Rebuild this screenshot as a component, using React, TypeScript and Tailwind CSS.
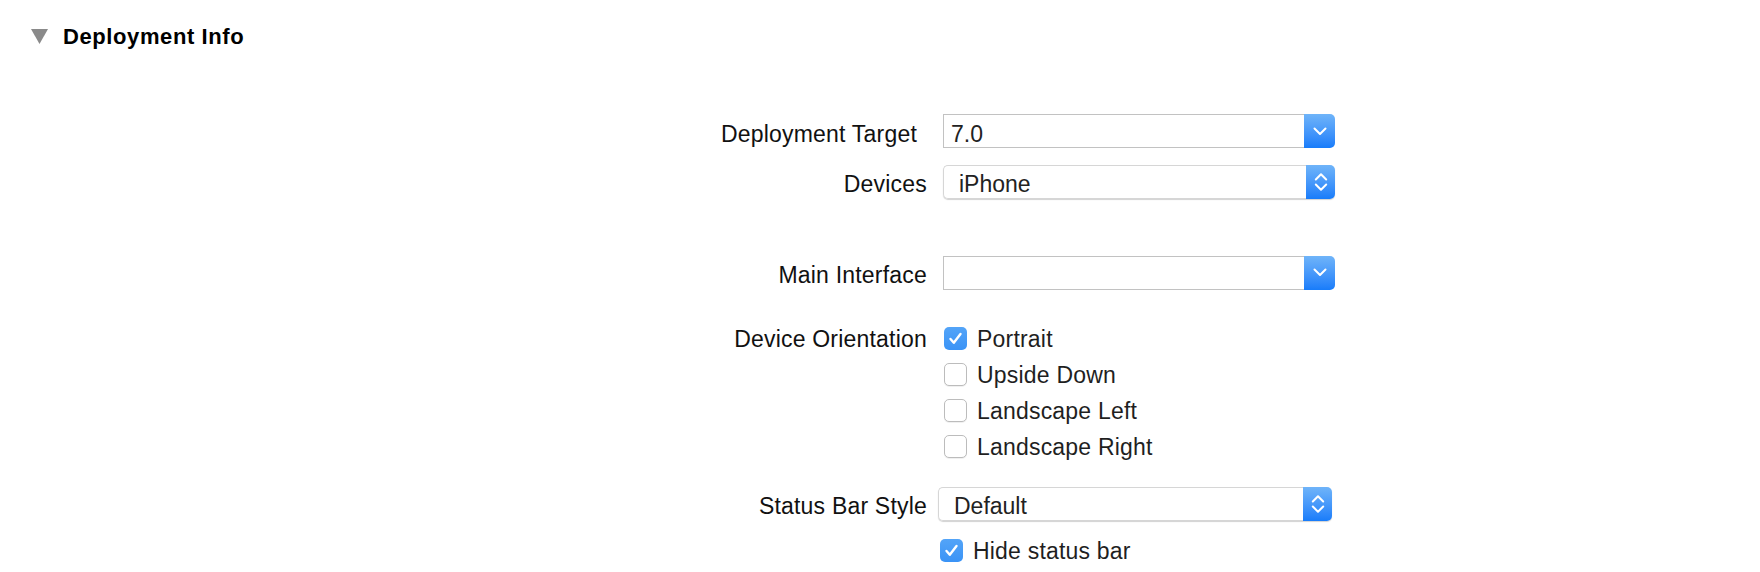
import clsx from "clsx";

function Chevron({ double }: { double?: boolean }) {
  if (double) {
    return (
      <svg width="14" height="20" viewBox="0 0 14 20" fill="none" stroke="white" strokeWidth="2" strokeLinecap="round" strokeLinejoin="round">
        <path d="M1.8 7.5 7 2.3l5.2 5.2" />
        <path d="M1.8 12.5 7 17.7l5.2-5.2" />
      </svg>
    );
  }
  return (
    <svg width="14" height="9" viewBox="0 0 14 9" fill="none" stroke="white" strokeWidth="2" strokeLinecap="round" strokeLinejoin="round">
      <path d="M1.5 1.5 7 7l5.5-5.5" />
    </svg>
  );
}

function Popup({
  value,
  double,
  rounded,
  pad = "pl-[7px]",
  className,
}: {
  value?: string;
  double?: boolean;
  rounded?: boolean;
  pad?: string;
  className?: string;
}) {
  return (
    <div
      className={clsx(
        "flex h-[34px] w-[392px]",
        rounded && "rounded-[5px] shadow-[0_1px_1px_rgba(0,0,0,0.18)]",
        className
      )}
    >
      <div
        className={clsx(
          "flex flex-1 items-center border border-r-0 bg-white pt-[6px] text-[23px] text-[#222]",
          rounded ? "rounded-l-[5px] border-[#d6d6d6]" : "border-[#c2c2c2]",
          pad
        )}
      >
        {value}
      </div>
      <div
        className={clsx(
          "flex items-center justify-center rounded-r-[5px] bg-linear-to-b from-[#6fb4f9] to-[#177cfa]",
          rounded ? "w-[29px]" : "w-[31px]"
        )}
      >
        <Chevron double={double} />
      </div>
    </div>
  );
}

function Check({ checked, label }: { checked?: boolean; label: string }) {
  return (
    <div className="flex items-center gap-[10px]">
      {checked ? (
        <div className="flex h-[23px] w-[23px] items-center justify-center rounded-[5px] bg-linear-to-b from-[#53a4f8] to-[#3a93f6]">
          <svg width="15" height="13" viewBox="0 0 15 13" fill="none" stroke="white" strokeWidth="2.4" strokeLinecap="round" strokeLinejoin="round">
            <path d="M2.5 7 5.8 10.8 12.5 2" />
          </svg>
        </div>
      ) : (
        <div className="h-[23px] w-[23px] rounded-[5px] border border-[#bcbcbc] bg-white shadow-[0_1px_0_rgba(0,0,0,0.06)]" />
      )}
      <span className="pt-[2px] text-[23px] tracking-[0.2px] text-[#1f1f1f]">{label}</span>
    </div>
  );
}

const labelCls = "w-[927px] shrink-0 text-right text-[23px] tracking-[0.2px] text-[#111]";

export default function App() {
  return (
    <div className="h-[572px] w-full overflow-hidden bg-white font-['Liberation_Sans',Arial,sans-serif]">
      <div className="mt-[22px] flex h-[28px] items-center">
        <svg className="ml-[31px]" width="17" height="15" viewBox="0 0 17 15">
          <polygon points="0,0 17,0 8.5,15" fill="#8a8a8a" />
        </svg>
        <h2 className="ml-[15px] text-[22px] font-bold tracking-[0.6px] text-black">Deployment Info</h2>
      </div>

      <div className="mt-[64px] flex h-[34px] items-center">
        <div className={clsx(labelCls, "pr-[10px] pt-[6px]")}>Deployment Target</div>
        <Popup value="7.0" className="ml-[16px]" />
      </div>

      <div className="mt-[17px] flex h-[33px] items-center">
        <div className={clsx(labelCls, "pt-[6px]")}>Devices</div>
        <Popup value="iPhone" double rounded pad="pl-[15px]" className="ml-[16px] h-[33px]" />
      </div>

      <div className="mt-[58px] flex h-[33px] items-center">
        <div className={clsx(labelCls, "pt-[6px]")}>Main Interface</div>
        <Popup className="ml-[16px] h-[33px]" />
      </div>

      <div className="mt-[31px] flex">
        <div className={clsx(labelCls, "flex h-[36px] items-center justify-end pt-[2px]")}>Device Orientation</div>
        <div className="ml-[17px] flex flex-col">
          {[
            { label: "Portrait", checked: true },
            { label: "Upside Down" },
            { label: "Landscape Left" },
            { label: "Landscape Right" },
          ].map((o) => (
            <div key={o.label} className="flex h-[36px] items-center">
              <Check label={o.label} checked={o.checked} />
            </div>
          ))}
        </div>
      </div>

      <div className="mt-[23px] flex h-[33px] items-center">
        <div className={clsx(labelCls, "-mr-[3px] pt-[6px]")}>Status Bar Style</div>
        <Popup value="Default" double rounded pad="pl-[15px]" className="ml-[14px] h-[33px] w-[394px]" />
      </div>

      <div className="mt-[18px] flex h-[24px] items-center pl-[940px]">
        <Check label="Hide status bar" checked />
      </div>
    </div>
  );
}
